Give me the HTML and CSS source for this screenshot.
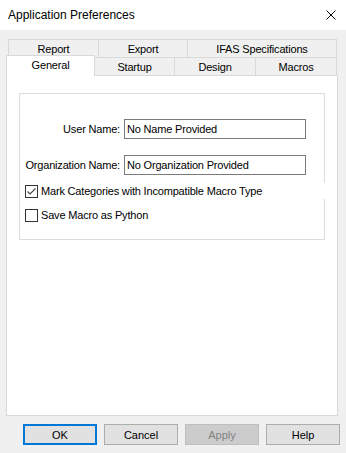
FILE: index.html
```html
<!DOCTYPE html>
<html lang="en">
<head>
    <meta charset="UTF-8">
    <title>Application Preferences</title>
    <link rel="stylesheet" href="styles.css">
</head>
<body>
    <div class="dialog">
        <div class="titlebar">
            <span class="title">Application Preferences</span>
            <svg class="close" width="10" height="10" viewBox="0 0 10 10">
                <path d="M0.5 0.5 L9.5 9.5 M9.5 0.5 L0.5 9.5" stroke="#000" stroke-width="1"/>
            </svg>
        </div>

        <div class="content">
            <div class="tab-row back">
                <div class="tab report">Report</div>
                <div class="tab export">Export</div>
                <div class="tab ifas last">IFAS Specifications</div>
            </div>
            <div class="tab-row front">
                <div class="tab general selected">General</div>
                <div class="tab startup">Startup</div>
                <div class="tab design">Design</div>
                <div class="tab macros last">Macros</div>
            </div>

            <div class="panel">
                <div class="group">
                    <div class="field">
                        <label>User Name:</label>
                        <div class="input">No Name Provided</div>
                    </div>
                    <div class="field">
                        <label>Organization Name:</label>
                        <div class="input">No Organization Provided</div>
                    </div>
                    <div class="check-row wide">
                        <span class="checkbox">
                            <svg width="11" height="11" viewBox="0 0 11 11">
                                <path d="M1.5 5.5 L4 8 L9.5 2.5" fill="none" stroke="#444" stroke-width="1.1"/>
                            </svg>
                        </span>
                        <span class="check-label">Mark Categories with Incompatible Macro Type</span>
                    </div>
                    <div class="check-row">
                        <span class="checkbox"></span>
                        <span class="check-label">Save Macro as Python</span>
                    </div>
                </div>
            </div>

            <div class="buttons">
                <button class="btn default">OK</button>
                <button class="btn">Cancel</button>
                <button class="btn disabled">Apply</button>
                <button class="btn">Help</button>
            </div>
        </div>
    </div>
</body>
</html>
```

FILE: styles.css
```css
* {
    margin: 0;
    padding: 0;
    box-sizing: border-box;
}

body {
    width: 346px;
    height: 453px;
    background: #f0f0f0;
    font-family: "Liberation Sans", Arial, sans-serif;
    font-size: 11px;
    letter-spacing: -0.18px;
    color: #000;
    overflow: hidden;
}

.titlebar {
    height: 30px;
    background: #fff;
    display: flex;
    align-items: center;
    justify-content: space-between;
    padding: 0 10px 0 8px;
}

.title {
    font-size: 12px;
    letter-spacing: 0;
}

.close {
    display: block;
}

.content {
    padding-top: 9px;
}

/* tabs */
.tab-row {
    display: flex;
    height: 18px;
}

.tab-row.back {
    margin-left: 8px;
}

.tab-row.front {
    margin-left: 6px;
    align-items: flex-start;
}

.tab {
    height: 18px;
    border-top: 1px solid #d9d9d9;
    border-left: 1px solid #d9d9d9;
    background: #f0f0f0;
    display: flex;
    align-items: center;
    justify-content: center;
    padding-top: 1px;
}

.tab.last {
    border-right: 1px solid #d9d9d9;
}

.report { width: 90px; }
.export { width: 89px; }
.ifas { width: 150px; }

.tab.general {
    width: 89px;
    height: 21px;
    margin-top: -2px;
    background: #fff;
    border-right: 1px solid #d9d9d9;
    position: relative;
    z-index: 1;
    padding-top: 0;
    padding-bottom: 3px;
}

.tab.startup {
    width: 79px;
    border-left: none;
}

.design { width: 81px; }
.macros { width: 82px; }

/* panel */
.panel {
    margin-left: 6px;
    width: 332px;
    height: 341px;
    background: #fff;
    border: 1px solid #d9d9d9;
    padding-top: 17px;
}

.group {
    margin-left: 12px;
    width: 306px;
    height: 147px;
    border: 1px solid #dcdcdc;
    padding-top: 25px;
}

.field {
    display: flex;
    align-items: center;
    height: 20px;
}

.field + .field {
    margin-top: 16px;
}

.field label {
    width: 100px;
    text-align: right;
}

.input {
    margin-left: 4px;
    width: 182px;
    height: 20px;
    border: 1px solid #7a7a7a;
    padding-left: 2px;
    line-height: 18px;
    white-space: nowrap;
}

.check-row {
    display: flex;
    align-items: center;
    height: 16px;
    margin-top: 8px;
    padding-left: 5px;
}

.check-row.wide {
    background: #fff;
    margin-right: -4px;
}

.checkbox {
    width: 13px;
    height: 13px;
    border: 1px solid #333;
    background: #fff;
    display: flex;
    align-items: center;
    justify-content: center;
}

.checkbox svg {
    display: block;
}

.check-label {
    margin-left: 3px;
    white-space: nowrap;
}

/* buttons */
.buttons {
    display: flex;
    gap: 7px;
    margin-top: 8px;
    padding-left: 23px;
}

.btn {
    width: 74px;
    height: 21px;
    background: #e1e1e1;
    border: 1px solid #adadad;
    font-family: "Liberation Sans", Arial, sans-serif;
    font-size: 11px;
    color: #000;
}

.btn.default {
    border: 2px solid #0078d7;
}

.btn.disabled {
    background: #cccccc;
    border-color: #bfbfbf;
    color: #838383;
}
```
